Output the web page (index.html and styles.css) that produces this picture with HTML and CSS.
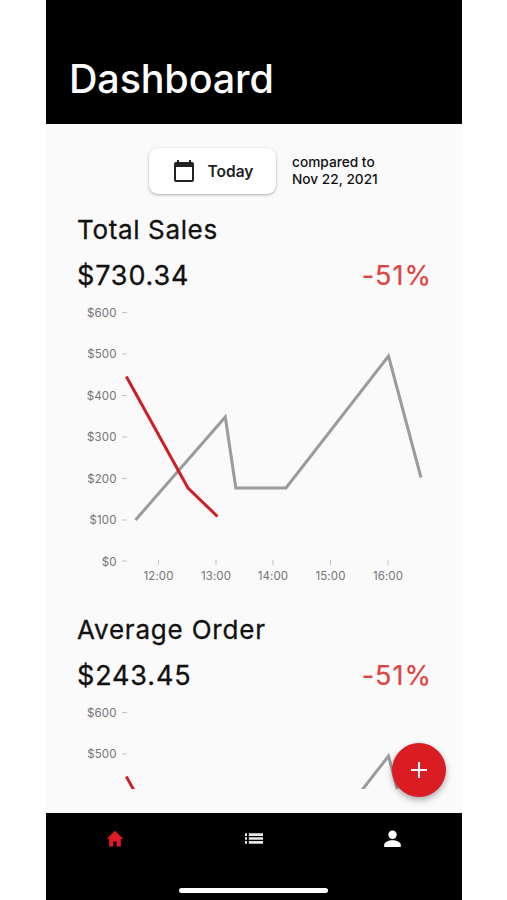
FILE: index.html
```html
<!DOCTYPE html>
<html lang="en">
<head>
<meta charset="utf-8">
<title>Dashboard</title>
<link rel="stylesheet" href="styles.css">
</head>
<body>
<div class="phone">
  <header class="header"><h1>Dashboard</h1></header>
  <main class="content">
    <div class="filter">
      <button class="date-button">
        <svg width="24" height="24" viewBox="0 0 24 24" fill="currentColor"><path d="M20 3h-1V1h-2v2H7V1H5v2H4c-1.1 0-2 .9-2 2v16c0 1.1.9 2 2 2h16c1.1 0 2-.9 2-2V5c0-1.1-.9-2-2-2zm0 18H4V8h16v13z"/></svg>
        <span>Today</span>
      </button>
      <p class="compare">compared to<br>Nov 22, 2021</p>
    </div>
    <section class="metric">
      <h2 class="title-sales">Total Sales</h2>
      <div class="figures"><span class="amount">$730.34</span><span class="change">-51%</span></div>
      <svg class="chart" width="352" height="290" viewBox="78 300 352 290">
        <g class="labels" text-anchor="end">
          <text x="116.5" y="316.5">$600</text><text x="116.5" y="358">$500</text><text x="116.5" y="399.5">$400</text><text x="116.5" y="441">$300</text><text x="116.5" y="482.5">$200</text><text x="116.5" y="524">$100</text><text x="116.5" y="565.5">$0</text>
        </g>
        <path class="ticks" d="M122 312.5h5M122 354h5M122 395.5h5M122 437h5M122 478.500h5M122 520h5M122 561h5M158.500 560v5M216 560v5M273 560v5M330.500 560v5M388 560v5"/>
        <g class="labels" text-anchor="middle">
          <text x="158.500" y="580">12:00</text><text x="216" y="580">13:00</text><text x="273" y="580">14:00</text><text x="330.500" y="580">15:00</text><text x="388" y="580">16:00</text>
        </g>
        <path class="line previous" d="M135.500 520L225.300 417L235.800 488H286L388.500 356L421 477.500"/>
        <path class="line current" d="M126.300 376.500L188 488L217.500 516.500"/>
      </svg>
    </section>
    <section class="metric">
      <h2 class="title-order">Average Order</h2>
      <div class="figures"><span class="amount">$243.45</span><span class="change">-51%</span></div>
      <svg class="chart" width="352" height="89" viewBox="78 300 352 89">
        <g class="labels" text-anchor="end"><text x="116.500" y="316.500">$600</text><text x="116.500" y="358">$500</text></g>
        <path class="ticks" d="M122 312.500h5M122 354h5"/>
        <path class="line previous" d="M286 488L388.500 356L421 477.500"/>
        <path class="line current" d="M126.300 376.500L188 488"/>
      </svg>
    </section>
    <button class="fab" aria-label="Add"><svg width="18" height="18" viewBox="0 0 18 18"><path d="M9 1v16M1 9h16" stroke="#fff" stroke-width="2"/></svg></button>
  </main>
  <nav class="nav">
    <a class="active"><svg width="20" height="20" viewBox="0 0 24 24" fill="currentColor"><path d="M10 21v-6h4v6h5v-9h3L12 2 2 12h3v9z"/></svg></a>
    <a><svg width="20" height="20" viewBox="0 0 20 20" fill="#e8e8e8"><path d="M1 4.300h2v2.600H1zM4.800 4.300h14.200v2.600H4.800zM1 8.200h2v2.600H1zM4.800 8.200h14.200v2.600H4.800zM1 12.100h2v2.600H1zM4.800 12.100h14.200v2.600H4.800z"/></svg></a>
    <a><svg width="20" height="20" viewBox="0 0 20 20" fill="currentColor"><circle cx="9.500" cy="5.700" r="4.200"/><path d="M1.200 18v-2.200c0-2.800 4.500-4.600 8.300-4.600s8.300 1.800 8.300 4.600V18z"/></svg></a>
    <div class="home-indicator"></div>
  </nav>
</div>
</body>
</html>
```
FILE: styles.css
```css
* { box-sizing: border-box; }
body { margin: 0; background: #fff; font-family: Inter, "Liberation Sans", sans-serif; color: #111; }
h1, h2, p { margin: 0; }
button { border: 0; padding: 0; font: inherit; }
.phone { width: 416px; height: 900px; margin-left: 46px; display: flex; flex-direction: column; background: #fafafa; overflow: hidden; }
.header { height: 124px; flex: none; background: #000; color: #fff; padding: 55px 0 0 23px; }
h1 { font-size: 39.5px; line-height: 48px; font-weight: 500; letter-spacing: -0.15px; }
.content { position: relative; height: 689px; flex: none; padding: 24px 32px 0; }
.filter { display: flex; align-items: center; gap: 16px; height: 46px; margin-left: 71px; }
.date-button { display: flex; align-items: center; justify-content: center; gap: 12px; width: 127px; height: 46px; border-radius: 9px; background: #fff; color: #222; font-size: 15.5px; font-weight: 600; box-shadow: 0 1px 3px rgba(0, 0, 0, .32); }
.compare { font-size: 13.7px; line-height: 16.5px; font-weight: 500; white-space: nowrap; position: relative; top: -0.5px; }
.metric { display: flex; flex-direction: column; height: 400px; padding-top: 20px; }
h2 { font-size: 26px; line-height: 32px; font-weight: 400; white-space: nowrap; -webkit-text-stroke: .3px; margin-left: -1px; }
.title-sales { letter-spacing: .65px; }
.title-order { letter-spacing: .8px; }
.figures { display: flex; justify-content: space-between; height: 32px; margin: 13px -2px 0 -1px; font-size: 27px; line-height: 33px; }
.amount { letter-spacing: .85px; -webkit-text-stroke: .3px; }
.change { color: #e04340; letter-spacing: 1px; -webkit-text-stroke: .2px; }
.chart { display: block; margin-top: 9px; flex: none; }
.labels { font-size: 11.5px; fill: #757575; letter-spacing: .1px; }
.ticks { stroke: #c4c4c4; stroke-width: 1; fill: none; }
.line { fill: none; stroke-width: 3; }
.previous { stroke: #9b9b9b; }
.current { stroke: #cc2027; }
.fab { position: absolute; left: 346px; top: 619px; width: 54px; height: 54px; border-radius: 50%; background: #da1c23; display: flex; align-items: center; justify-content: center; box-shadow: 0 3px 6px rgba(0, 0, 0, .32); }
.nav { position: relative; height: 87px; flex: none; background: #000; color: #fff; display: grid; grid-template-columns: repeat(3, 1fr); justify-items: center; padding-top: 16px; }
.nav a { height: 20px; }
.active { color: #e01b24; }
.home-indicator { position: absolute; left: 133px; bottom: 7px; width: 149px; height: 5px; border-radius: 3px; background: #fff; }
```
